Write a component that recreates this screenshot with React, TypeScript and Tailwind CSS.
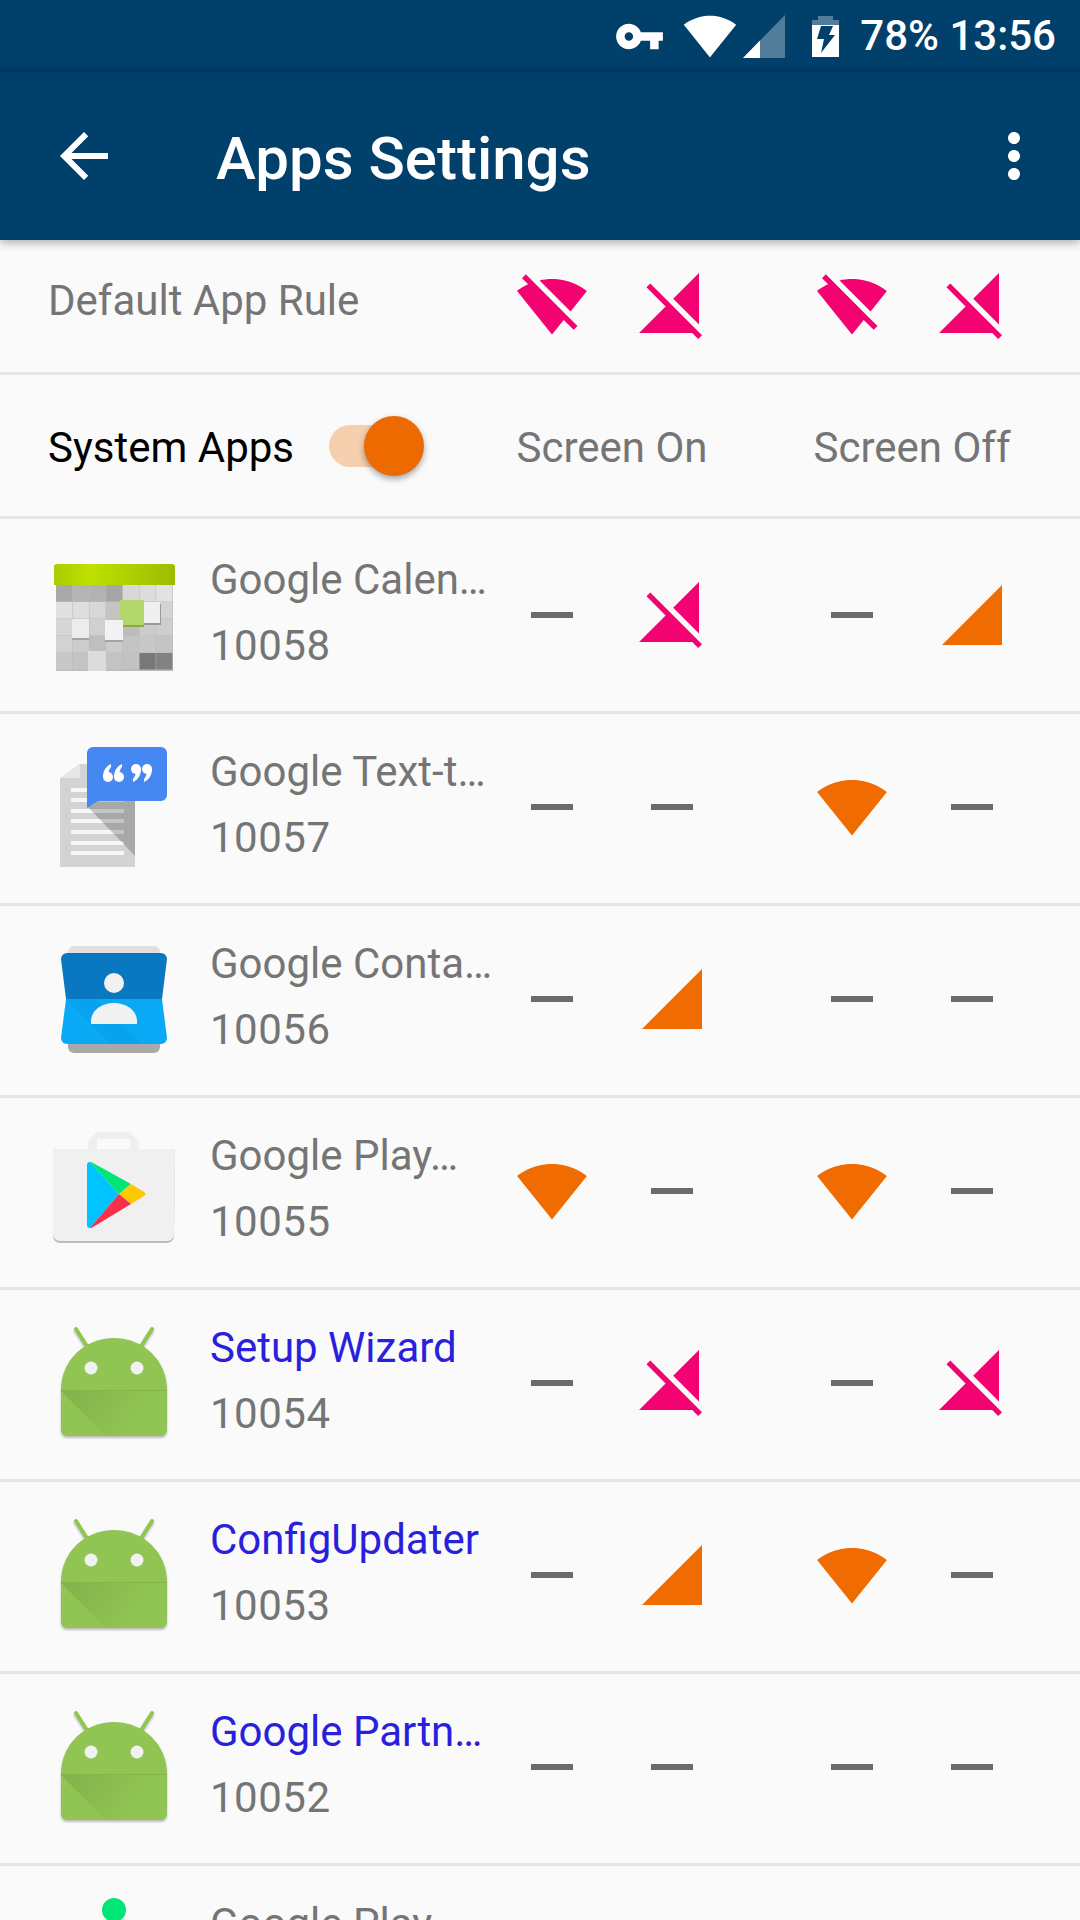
import React from 'react';

type Rule = 'wifiOff' | 'cellOff' | 'wifi' | 'cell' | 'none';

const PATHS: Record<Rule, string> = {
  wifiOff:
    'M23.64 7c-.45-.34-4.93-4-11.64-4-1.5 0-2.89.19-4.15.48L18.18 13.8 23.64 7zm-6.6 8.22L3.27 1.44 2 2.72l2.05 2.06C1.91 5.76.59 6.82.36 7l11.63 14.49.01.01.01-.01 3.9-4.86 3.32 3.32 1.27-1.27-3.46-3.46z',
  cellOff:
    'M21 1l-8.59 8.59L21 18.18V1zM4.77 4.5L3.5 5.77l6.36 6.36L1 21h17.73l2 2L22 21.73 4.77 4.5z',
  wifi: 'M12.01 21.49L23.64 7c-.45-.34-4.93-4-11.64-4C5.28 3 .81 6.66.36 7l11.64 14.5.01-.01z',
  cell: 'M2 22h20V2z',
  none: 'M19 13H5v-2h14v2z',
};

const RuleIcon = ({ rule }: { rule: Rule }) => {
  const color =
    rule === 'none' ? 'fill-[#6b6b6b]' : rule === 'wifi' || rule === 'cell' ? 'fill-[#f06c00]' : 'fill-[#f30272]';
  return (
    <div className="flex w-[120px] justify-center">
      <svg viewBox="0 0 24 24" className={`h-[72px] w-[72px] ${color}`}>
        <path d={PATHS[rule]} />
      </svg>
    </div>
  );
};

const RuleColumns = ({ rules }: { rules: Rule[] }) => (
  <div className="flex gap-[60px]">
    <div className="flex w-[240px]">
      <RuleIcon rule={rules[0]} />
      <RuleIcon rule={rules[1]} />
    </div>
    <div className="flex w-[240px]">
      <RuleIcon rule={rules[2]} />
      <RuleIcon rule={rules[3]} />
    </div>
  </div>
);

const StatusBar = () => (
  <div className="flex h-[72px] items-center justify-end bg-gradient-to-b from-[#00406b] from-[92%] to-[#02365a] pr-[24px]">
    <svg viewBox="0 0 24 24" className="h-[51px] w-[51px] fill-white">
      <path d="M12.65 10C11.83 7.67 9.61 6 7 6c-3.31 0-6 2.69-6 6s2.69 6 6 6c2.61 0 4.83-1.67 5.65-4H17v4h4v-4h2v-4H12.65zM7 14c-1.1 0-2-.9-2-2s.9-2 2-2 2 .9 2 2-.9 2-2 2z" />
    </svg>
    <svg viewBox="0 0 24 24" className="ml-[18px] h-[54px] w-[54px] fill-white">
      <path d={PATHS.wifi} />
    </svg>
    <svg viewBox="0 0 42 43" className="ml-[6px] h-[43px] w-[42px]">
      <path d="M0 43L42 0v43z" fill="#ffffff" fillOpacity="0.32" />
      <path d="M0 43L17 25.6V43z" fill="#ffffff" />
    </svg>
    <svg viewBox="0 0 27 41" className="ml-[27px] h-[41px] w-[27px]">
      <path d="M6 0h15v4h6v5H0V4h6z" fill="#ffffff" fillOpacity="0.32" />
      <path d="M0 9h27v32H0z" fill="#ffffff" />
      <path d="M9 10h12l-4 9h6L9 37l3-14H5z" fill="#00406b" />
    </svg>
    <span className="ml-[21px] text-[42px] font-medium leading-none text-white">78% 13:56</span>
  </div>
);

const Toolbar = () => (
  <div className="relative z-10 flex h-[168px] items-center bg-[#00406b] pl-[48px] pr-[30px] shadow-[0_3px_9px_rgba(0,0,0,0.3)]">
    <svg viewBox="0 0 24 24" className="h-[72px] w-[72px] fill-white">
      <path d="M20 11H7.83l5.59-5.59L12 4l-8 8 8 8 1.41-1.41L7.83 13H20v-2z" />
    </svg>
    <h1 className="ml-[96px] flex-1 pt-[5px] text-[60px] font-medium leading-none text-white">Apps Settings</h1>
    <svg viewBox="0 0 24 24" className="h-[72px] w-[72px] fill-white">
      <path d="M12 8c1.1 0 2-.9 2-2s-.9-2-2-2-2 .9-2 2 .9 2 2 2zm0 2c-1.1 0-2 .9-2 2s.9 2 2 2 2-.9 2-2-.9-2-2-2zm0 6c-1.1 0-2 .9-2 2s.9 2 2 2 2-.9 2-2-.9-2-2-2z" />
    </svg>
  </div>
);

const CalendarIcon = () => {
  const shades = [
    ['#a9a9a9', '#b4b4b4', '#b2b2b2', '#a6a6a6', '#d8d8d8', '#dcdcdc', '#e2e2e2'],
    ['#e0e0e0', '#dedede', '#d8d8d8', '#c4c4c4', '#bcbcbc', '#cfcfcf', '#d4d4d4'],
    ['#d6d6d6', '#dcdcdc', '#d0d0d0', '#c4c4c4', '#bcbcbc', '#cccccc', '#cecece'],
    ['#d2d2d2', '#cccccc', '#bfbfbf', '#cccccc', '#c4c4c4', '#c8c8c8', '#c4c4c4'],
    ['#c8c8c8', '#c4c4c4', '#d0d0d0', '#c4c4c4', '#c2c2c2', '#787878', '#828282'],
  ];
  return (
    <svg viewBox="0 0 120 120" className="h-[120px] w-[120px] overflow-visible">
      <defs>
        <linearGradient id="calTop" x1="0" x2="1" y1="0" y2="0">
          <stop offset="0" stopColor="#aacc00" />
          <stop offset="0.3" stopColor="#bfe000" />
          <stop offset="1" stopColor="#9cbc00" />
        </linearGradient>
      </defs>
      <rect x="2" y="29" width="117" height="86" fill="#bcbcbc" />
      {shades.map((row, r) =>
        row.map((c, i) => (
          <rect key={`${r}-${i}`} x={2 + i * 16.7} y={29 + r * 17} width={16.2} height={16.5} fill={c} />
        )),
      )}
      <path d="M0 11a3 3 0 013-3h115a3 3 0 013 3v18H0z" fill="url(#calTop)" />
      <rect x="90" y="48" width="17" height="21" fill="#9a9a9a" />
      <rect x="89" y="46" width="17" height="21" fill="#efefef" />
      <rect x="66" y="44" width="24" height="27" fill="#b3d76a" />
      <rect x="66" y="69" width="24" height="2" fill="#8aa84a" />
      <rect x="18" y="65" width="17" height="19" fill="#a4a4a4" />
      <rect x="18" y="63" width="17" height="19" fill="#ececec" />
      <rect x="51" y="66" width="18" height="20" fill="#a4a4a4" />
      <rect x="51" y="64" width="18" height="20" fill="#f2f2f2" />
      <rect x="34" y="95" width="18" height="20" fill="#dcdcdc" />
    </svg>
  );
};

const TtsIcon = () => (
  <svg viewBox="0 0 120 120" className="h-[120px] w-[120px] overflow-visible">
    <path d="M26 16h55v103H6V30z" fill="#d2d3d5" />
    <path d="M26 16v14H6z" fill="#e6e6e6" />
    {[40, 50, 61, 71, 82, 93, 103].map(y => (
      <rect key={y} x="17" y={y} width="53" height="4" fill="#f7f7f7" />
    ))}
    <path d="M33 58l48 50V30H33z" fill="#000000" fillOpacity="0.2" />
    <path d="M39-1h68a6 6 0 016 6v42a6 6 0 01-6 6H46c-4 0-9 5-13 7V5a6 6 0 016-6z" fill="#4688f1" />
    <circle cx="54" cy="29" r="5" fill="#ffffff" />
    <circle cx="65" cy="29" r="5" fill="#ffffff" />
    <path d="M49 29c0-6 3-11 8-13v3c-2 2-3 5-3 10zM60 29c0-6 3-11 8-13v3c-2 2-3 5-3 10z" fill="#ffffff" />
    <circle cx="82" cy="21" r="5" fill="#ffffff" />
    <circle cx="93" cy="21" r="5" fill="#ffffff" />
    <path d="M87 21c0 6-3 11-8 13v-3c2-2 3-5 3-10zM98 21c0 6-3 11-8 13v-3c2-2 3-5 3-10z" fill="#ffffff" />
  </svg>
);

const ContactsIcon = () => (
  <svg viewBox="0 0 120 120" className="h-[120px] w-[120px] overflow-visible">
    <path d="M14 12a6 6 0 016-6h80a6 6 0 016 6v8H14z" fill="#e0e0e0" />
    <path d="M14 100h92v7a6 6 0 01-6 6H20a6 6 0 01-6-6z" fill="#a9a9a9" />
    <path d="M13 13h94a6 6 0 016 6l-5 40H12L7 19a6 6 0 016-6z" fill="#0a78c0" />
    <path d="M12 59h96l5 39a6 6 0 01-6 6H13a6 6 0 01-6-6z" fill="#0aa9f5" />
    <path d="M12 59h30l45 45H57z" fill="#000000" fillOpacity="0.03" />
    <circle cx="60" cy="43" r="10" fill="#f1f1f1" />
    <path d="M37 84v-3c0-10 10-18 23-18s23 8 23 18v3z" fill="#f1f1f1" />
  </svg>
);

const PlayIcon = () => (
  <svg viewBox="0 0 120 120" className="h-[120px] w-[120px] overflow-visible">
    <path d="M34 17v-8l9-9h33l9 9v8h-9v-8a2 2 0 00-2-2H45a2 2 0 00-2 2v8z" fill="#efefef" />
    <path d="M-1 20a3 3 0 013-3h116a3 3 0 013 3l-1 84a7 7 0 01-7 7H6a7 7 0 01-7-7z" fill="#bdbdbd" />
    <path d="M-1 20a3 3 0 013-3h116a3 3 0 013 3l-1 82a7 7 0 01-7 7H6a7 7 0 01-7-7z" fill="#f0f0f0" />
    <path d="M33 33c0-2 1-3 3-3l29 32-29 34c-2 0-3-1-3-3z" fill="#00c3ff" />
    <path d="M36 30c1 0 2 0 3 1l38 21-12 10z" fill="#00e676" />
    <path d="M77 52l13 8c2 1 2 3 0 4l-13 8-12-10z" fill="#ffc800" />
    <path d="M65 62l12 10-38 23c-1 1-2 1-3 1z" fill="#f9304a" />
  </svg>
);

const AndroidIcon = ({ id }: { id: string }) => (
  <svg
    viewBox="0 0 120 120"
    className="h-[120px] w-[120px] overflow-visible drop-shadow-[0_2px_1px_rgba(0,0,0,0.25)]"
  >
    <defs>
      <linearGradient id={id} x1="0" x2="1" y1="0" y2="0.35">
        <stop offset="0" stopColor="#000000" stopOpacity="0.1" />
        <stop offset="1" stopColor="#000000" stopOpacity="0" />
      </linearGradient>
    </defs>
    <path d="M22 5l12 19M98 5L86 24" stroke="#8fc552" strokeWidth="4" strokeLinecap="round" />
    <path d="M7 66C7 36 31 14 60 14s53 22 53 52v40a6 6 0 01-6 6H13a6 6 0 01-6-6z" fill="#90c553" />
    <path d="M7 66h106v1H7z" fill="#000000" fillOpacity="0.08" />
    <path d="M7 67h90v45H52z" fill={`url(#${id})`} />
    <circle cx="37" cy="44" r="6.5" fill="#f1f1f1" />
    <circle cx="83" cy="44" r="6.5" fill="#f1f1f1" />
  </svg>
);

const DotIcon = () => (
  <svg viewBox="0 0 120 120" className="h-[120px] w-[120px] overflow-visible">
    <circle cx="60" cy="10" r="12" fill="#00e676" />
  </svg>
);

type App = {
  name: string;
  uid: string;
  icon: React.ReactNode;
  rules: Rule[];
  system?: boolean;
};

const APPS: App[] = [
  { name: 'Google Calen…', uid: '10058', icon: <CalendarIcon />, rules: ['none', 'cellOff', 'none', 'cell'] },
  { name: 'Google Text-t…', uid: '10057', icon: <TtsIcon />, rules: ['none', 'none', 'wifi', 'none'] },
  { name: 'Google Conta…', uid: '10056', icon: <ContactsIcon />, rules: ['none', 'cell', 'none', 'none'] },
  { name: 'Google Play…', uid: '10055', icon: <PlayIcon />, rules: ['wifi', 'none', 'wifi', 'none'] },
  { name: 'Setup Wizard', uid: '10054', icon: <AndroidIcon id="fold54" />, rules: ['none', 'cellOff', 'none', 'cellOff'], system: true },
  { name: 'ConfigUpdater', uid: '10053', icon: <AndroidIcon id="fold53" />, rules: ['none', 'cell', 'wifi', 'none'], system: true },
  { name: 'Google Partn…', uid: '10052', icon: <AndroidIcon id="fold52" />, rules: ['none', 'none', 'none', 'none'], system: true },
  { name: 'Google Play…', uid: '10051', icon: <DotIcon />, rules: ['none', 'none', 'none', 'none'] },
];

const AppRow = ({ app }: { app: App }) => (
  <div className="flex h-[192px] items-center border-b-[3px] border-[#e6e6e6] pb-[4px] pr-[48px]">
    <div className="ml-[54px] w-[120px] shrink-0 pt-[3px]">{app.icon}</div>
    <div className="ml-[36px] w-[282px] whitespace-nowrap pb-[4px]">
      <div className={`text-[42px] leading-[66px] ${app.system ? 'text-[#2a1fdc]' : 'text-[#757575]'}`}>{app.name}</div>
      <div className="text-[42px] leading-[66px] tracking-[0.5px] text-[#757575]">{app.uid}</div>
    </div>
    <RuleColumns rules={app.rules} />
  </div>
);

export default function App() {
  return (
    <div className="h-[1920px] w-[1080px] overflow-hidden bg-[#fafafa] font-['Roboto',sans-serif]">
      <StatusBar />
      <Toolbar />
      <div className="flex h-[135px] items-center border-b-[3px] border-[#e6e6e6] pl-[48px] pr-[48px]">
        <div className="flex-1 pb-[12px] text-[42px] text-[#757575]">Default App Rule</div>
        <RuleColumns rules={['wifiOff', 'cellOff', 'wifiOff', 'cellOff']} />
      </div>
      <div className="flex h-[144px] items-center border-b-[3px] border-[#e6e6e6] pl-[48px] pr-[48px]">
        <div className="flex flex-1 items-center">
          <span className="pt-[3px] text-[42px] text-black">System Apps</span>
          <div className="relative ml-[35px] h-[42px] w-[82px] rounded-full bg-[#f6cfae]">
            <div className="absolute left-[35px] top-[-9px] h-[60px] w-[60px] rounded-full bg-[#ec6a00] shadow-[0_3px_6px_rgba(0,0,0,0.35)]" />
          </div>
        </div>
        <div className="flex gap-[60px] pt-[3px] text-[42px] text-[#757575]">
          <div className="w-[240px] text-center">Screen On</div>
          <div className="w-[240px] text-center">Screen Off</div>
        </div>
      </div>
      <div className="pt-[3px]">
        {APPS.map(app => (
          <AppRow key={app.uid} app={app} />
        ))}
      </div>
    </div>
  );
}
